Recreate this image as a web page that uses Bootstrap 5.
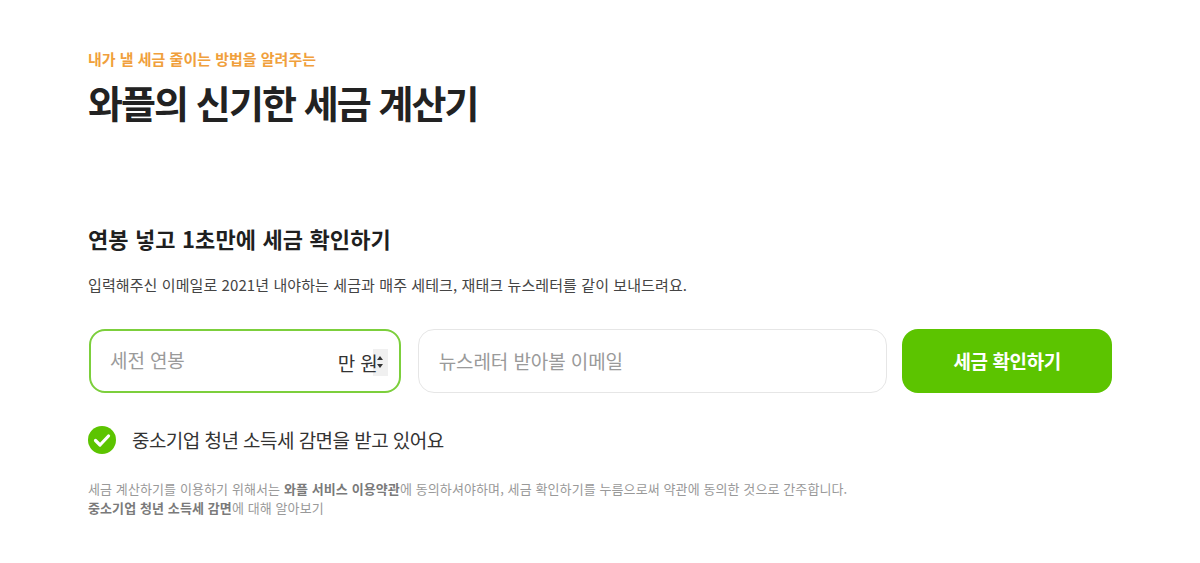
<!doctype html>
<html lang="ko">
<head>
<meta charset="utf-8">
<link rel="stylesheet" href="https://cdn.jsdelivr.net/npm/bootstrap@5.3.0/dist/css/bootstrap.min.css">
<style>
html,body{height:100%;background:#fff;overflow:hidden}
body{font-family:"Noto Sans CJK KR","Noto Sans",sans-serif;color:#1f1f1f}
.tax-wrap{padding:49px 88px 0 88px}
.tax-eyebrow{font-size:15px;line-height:20px;font-weight:700;color:#f0a03c;letter-spacing:0;margin:0}
.tax-title{font-size:38px;line-height:52px;font-weight:700;letter-spacing:-1.92px;color:#222;margin:7px 0 0}
.tax-sub{font-size:22px;line-height:30px;font-weight:700;letter-spacing:.12px;margin:95px 0 0}
.tax-desc{font-size:15px;line-height:20px;color:#444;letter-spacing:.09px;margin:22px 0 0;font-weight:400}
.tax-form{margin-top:34px;gap:16px}
.salary-box{width:312px;height:64px;margin-left:1px;border:2px solid #7ccf3c;border-radius:16px;padding:0 11px 0 19px}
.tax-field{height:64px;border:1px solid #e6e6e6;border-radius:16px;padding:0 20px;width:470px;font-size:19px;letter-spacing:-.1px;color:#9a9a9a;margin-left:1px;margin-right:-1px}
.salary-ph{font-size:19px;color:#9a9a9a;letter-spacing:-.1px;position:relative;top:-1px}
.salary-unit{font-size:19px;color:#333;letter-spacing:-.1px;line-height:26px;position:relative;top:2px;z-index:1}
.spin{width:15px;height:27px;background:#f0f0f0;flex:none;margin-left:-5px;position:relative;top:1px}
.tax-btn{width:210px;height:64px;border-radius:16px;background:#5cc400;border:0;color:#fff;font-size:19px;font-weight:700;letter-spacing:-.4px}
.tax-btn:hover{background:#5cc400;color:#fff}
.tax-check{margin-top:33px;gap:16px;font-size:19px;line-height:28px;color:#333;letter-spacing:-.55px}
.tax-note{margin:25px 0 0;font-size:13px;line-height:19px;color:#999;letter-spacing:.1px}
.tax-note b{font-weight:700;color:#7a7a7a}
</style>
</head>
<body>
<main class="tax-wrap">
<p class="tax-eyebrow">내가 낼 세금 줄이는 방법을 알려주는</p>
<h1 class="tax-title">와플의 신기한 세금 계산기</h1>
<h2 class="tax-sub">연봉 넣고 1초만에 세금 확인하기</h2>
<p class="tax-desc">입력해주신 이메일로 2021년 내야하는 세금과 매주 세테크, 재태크 뉴스레터를 같이 보내드려요.</p>
<form class="d-flex tax-form">
<div class="salary-box d-flex align-items-center justify-content-between">
<span class="salary-ph">세전 연봉</span>
<span class="d-flex align-items-center"><span class="salary-unit">만 원</span>
<span class="spin d-flex align-items-center justify-content-center"><svg width="8" height="16" viewBox="0 0 8 16" aria-hidden="true"><path d="M4 2 7 6H1zM4 14 1 10h6z" fill="#333"/></svg></span></span>
</div>
<div class="tax-field d-flex align-items-center">뉴스레터 받아볼 이메일</div>
<button type="button" class="btn tax-btn">세금 확인하기</button>
</form>
<div class="d-flex align-items-center tax-check">
<svg width="28" height="28" viewBox="0 0 28 28" aria-hidden="true"><circle cx="14" cy="14" r="14" fill="#5cc400"/><path d="M7.5 14.5 12 19l8.5-9" fill="none" stroke="#fff" stroke-width="3.2" stroke-linecap="round" stroke-linejoin="round"/></svg>
<span>중소기업 청년 소득세 감면을 받고 있어요</span>
</div>
<p class="tax-note">세금 계산하기를 이용하기 위해서는 <b>와플 서비스 이용약관</b>에 동의하셔야하며, 세금 확인하기를 누름으로써 약관에 동의한 것으로 간주합니다.<br><b>중소기업 청년 소득세 감면</b>에 대해 알아보기</p>
</main>
</body>
</html>
